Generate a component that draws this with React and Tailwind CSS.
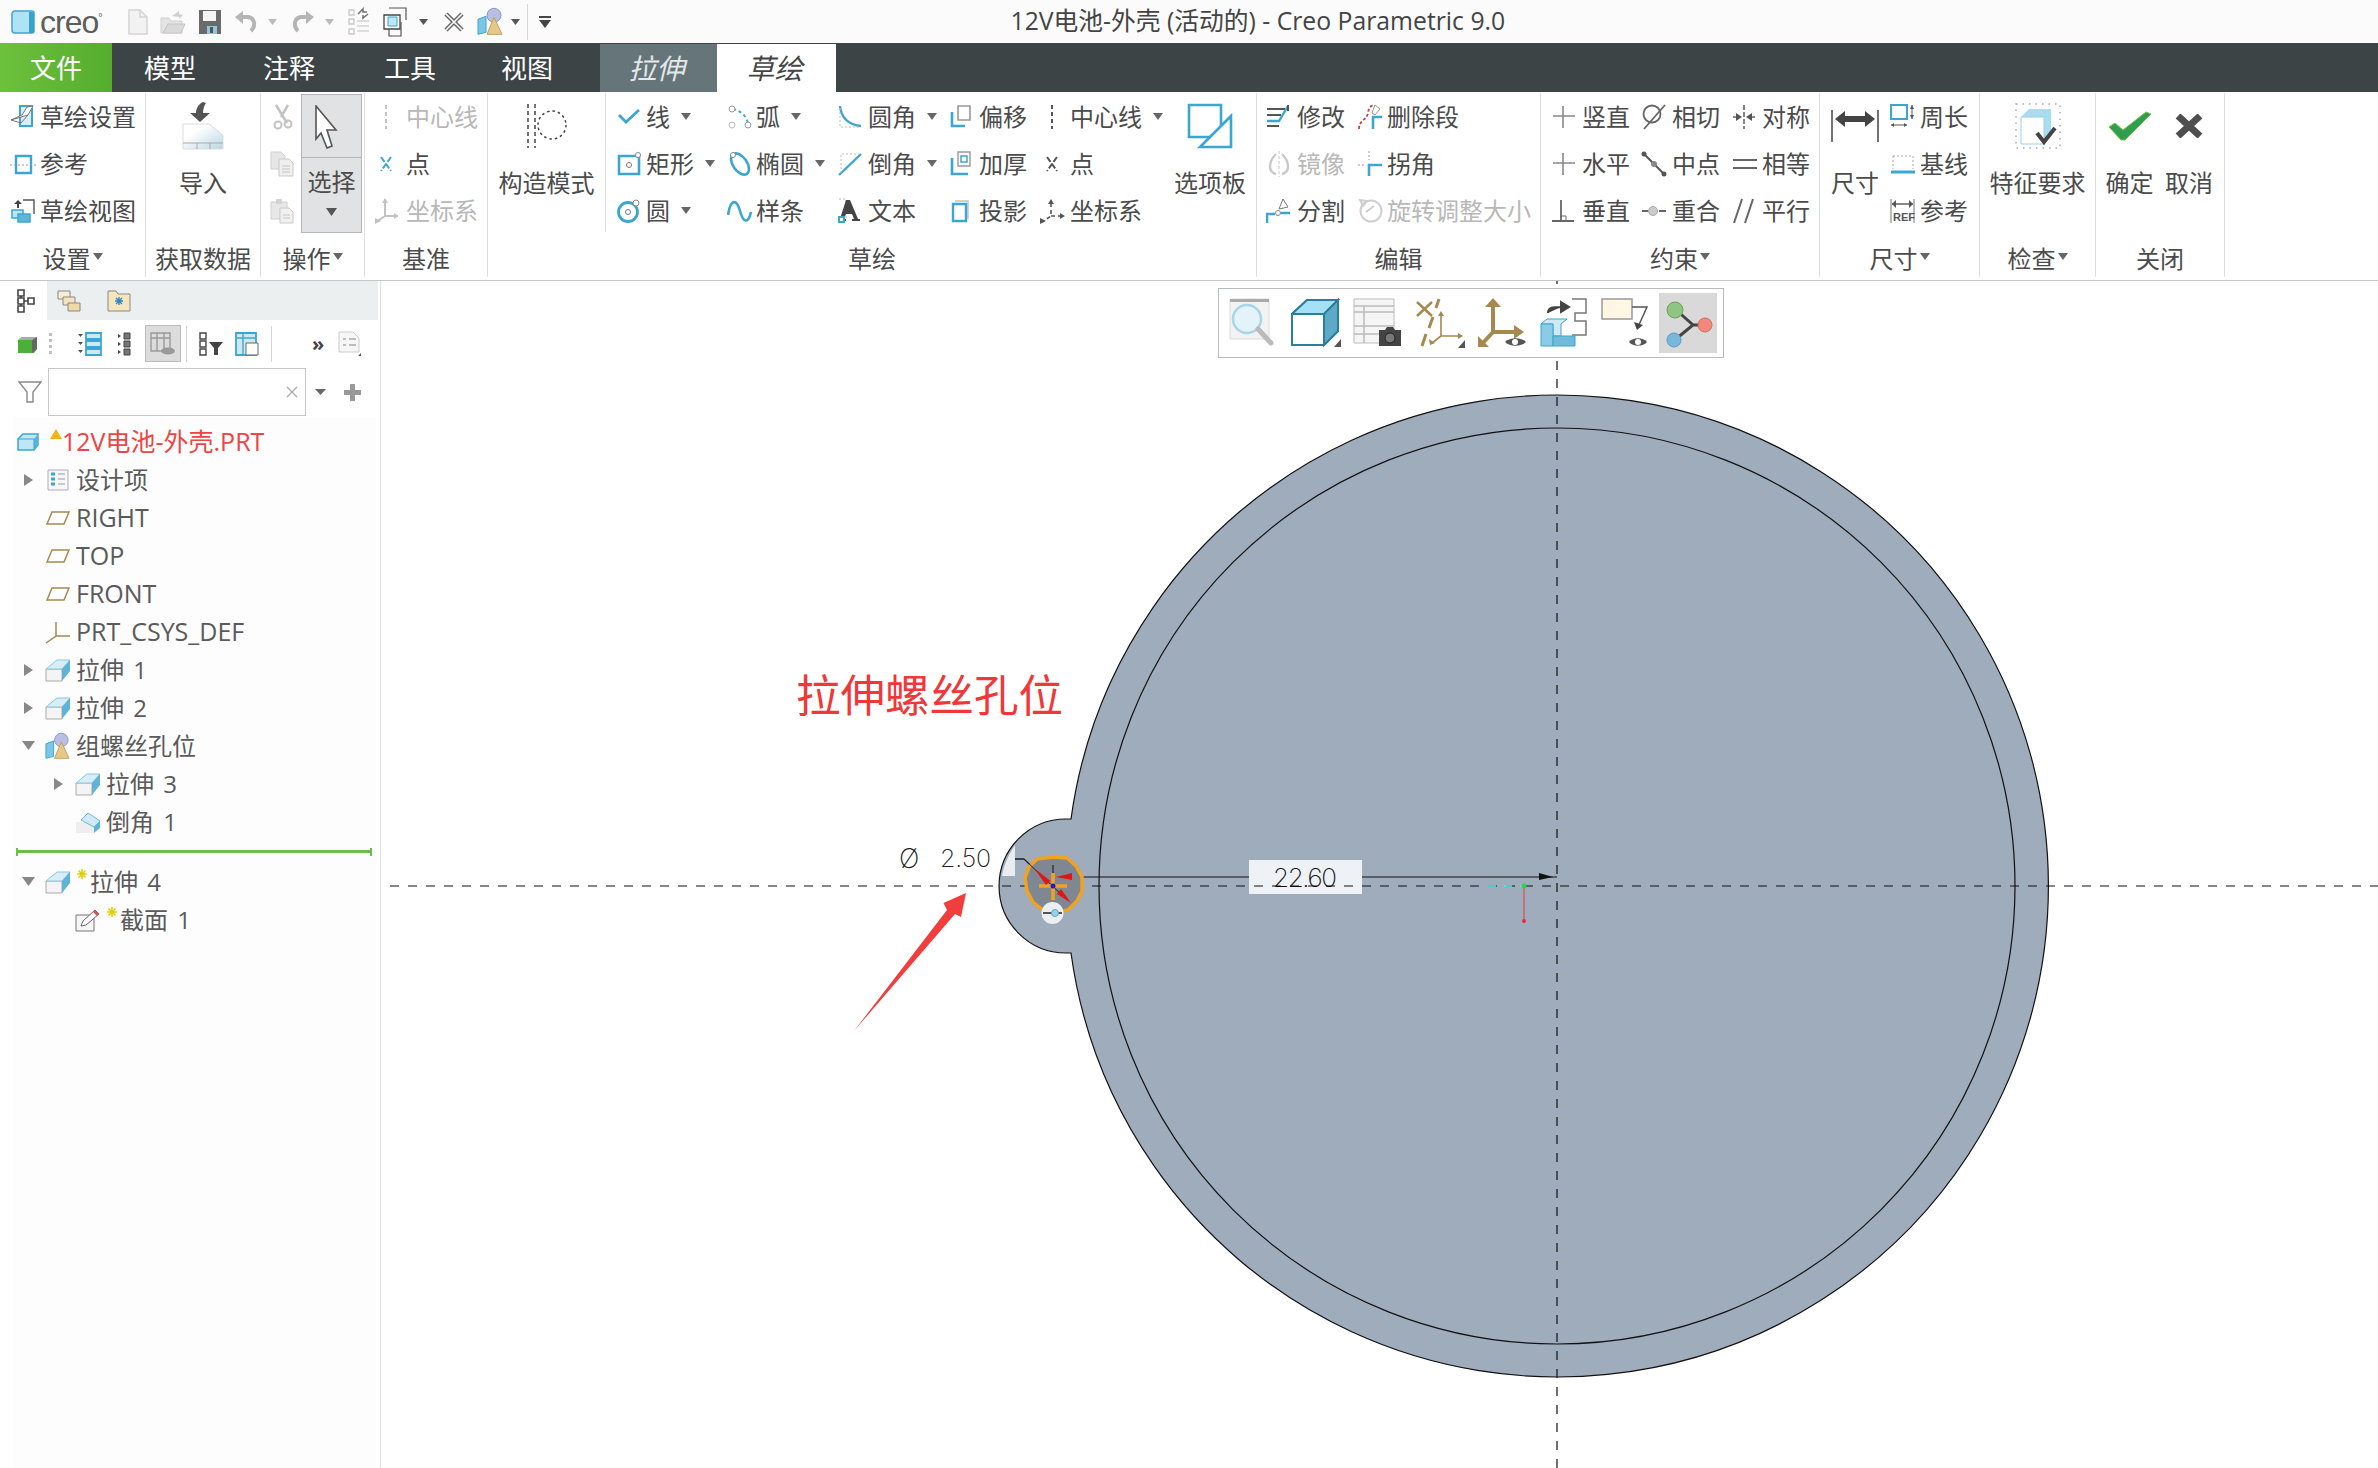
import React from "react";

const BLUE = "#3ba6d2";
const SKY = "#bfe6f5";
const BROWN = "#a5894f";

const S = ({ w = 26, h = 26, children }) => (
  <svg width={w} height={h} viewBox={`0 0 ${w} ${h}`} fill="none" className="shrink-0">
    {children}
  </svg>
);

const Caret = () => (
  <svg width="10" height="7" viewBox="0 0 10 7" className="shrink-0 ml-[11px]">
    <path d="M0 0h10L5 7z" fill="#666" />
  </svg>
);

// ---- quick access icons
const Logo = () => (
  <S w={24} h={24}>
    <path d="M4 1h17a2 2 0 0 1 2 2v18a2 2 0 0 1-2 2H4a3 3 0 0 1-3-3V4a3 3 0 0 1 3-3z" fill="#aee3f5" stroke="#3fa7cf" strokeWidth="1.5" />
    <path d="M18 2h3a2 2 0 0 1 2 2v17a2 2 0 0 1-2 2h-3z" fill="#35a3ce" />
  </S>
);
const NewDoc = () => (
  <S w={22} h={26}>
    <path d="M2 1h11l7 7v17H2z" fill="#f2f2f2" stroke="#d4d4d4" strokeWidth="1.5" />
    <path d="M13 1v7h7" stroke="#d4d4d4" strokeWidth="1.5" />
  </S>
);
const OpenDoc = () => (
  <S w={26} h={26}>
    <path d="M1 24V9h8l2 3h11v12z" fill="#e4e4e4" stroke="#cfcfcf" />
    <path d="M12 7l7-5v3l4 1-4 4v-2z" fill="#cfcfcf" />
    <path d="M3 24l5-9h17l-4 9z" fill="#d9d9d9" stroke="#c6c6c6" />
  </S>
);
const Save = () => (
  <S w={24} h={26}>
    <path d="M1 1h22v24H1z" fill="#6a6a6a" />
    <path d="M5 2h13v10H5z" fill="#f4f4f4" />
    <path d="M9 17h10v8H9z" fill="#8fc7de" />
    <path d="M12 18h3v6h-3z" fill="#555" />
  </S>
);
const Undo = ({ flip }) => (
  <svg width="24" height="22" viewBox="0 0 24 22" fill="none" className={flip ? "-scale-x-100 shrink-0" : "shrink-0"}>
    <path d="M17 20c5-5 4-13-3-14H7" stroke="#b5b5b5" strokeWidth="4" />
    <path d="M9 0v13L1 6z" fill="#b5b5b5" />
  </svg>
);
const Regen = () => (
  <S w={22} h={30}>
    <path d="M1 3h5v5H1zM1 12h5v5H1zM1 22h5v5H1z" stroke="#c9c9c9" strokeWidth="1.3" />
    <path d="M9 14h12M9 19h12M9 24h12" stroke="#d4d4d4" strokeWidth="1.5" />
    <path d="M10 7l5-5v3h4M20 7l-5 4V8" stroke="#777" strokeWidth="1.6" />
  </S>
);
const Windows = () => (
  <S w={24} h={30}>
    <path d="M6 1h17v12" stroke="#555" strokeWidth="1.2" />
    <path d="M1 8h16v14H1z" fill="#fff" stroke="#444" strokeWidth="1.3" />
    <path d="M6 22v7h12V15" stroke="#555" strokeWidth="1.2" />
    <path d="M5 10h9v9H5z" fill={SKY} stroke={BLUE} />
  </S>
);
const CloseX = () => (
  <S w={22} h={22}>
    <path d="M3 3l16 16M19 3L3 19" stroke="#666" strokeWidth="4.5" />
    <path d="M3 3l16 16M19 3L3 19" stroke="#fff" strokeWidth="1.6" />
  </S>
);
const Shapes = ({ w = 26 }) => (
  <svg width={w} height={w * 1.1} viewBox="0 0 26 28" fill="none" className="shrink-0">
    <path d="M1 12l8-3v16l-8 2z" fill="#7cc7e6" stroke={BLUE} />
    <circle cx="17" cy="8" r="7" fill="#b8bfe0" stroke="#8d97c4" />
    <path d="M17 10l8 17H10z" fill="#e6c98a" stroke="#c59f55" />
  </svg>
);
const Customize = () => (
  <S w={12} h={12}>
    <path d="M0 0h12v2H0z" fill="#444" />
    <path d="M0 4h12L6 12z" fill="#444" />
  </S>
);

// ---- ribbon small icons
const icons = {
  setup: (
    <S>
      <path d="M10 2h12v20H10z" fill="#d8eff9" stroke={BLUE} strokeWidth="2" />
      <path d="M1 16L18 11l5-9-6 1-5 8L1 16z" fill="#fff" stroke="#777" />
      <path d="M1 16l10 3 7-8" stroke="#777" />
    </S>
  ),
  ref: (
    <S>
      <path d="M6 5h15v17H6z" fill="#fff" stroke={BLUE} strokeWidth="2.4" />
      <path d="M0 14h26" stroke="#999" strokeDasharray="2 2" />
    </S>
  ),
  view: (
    <S>
      <path d="M13 2h11v14" stroke="#555" strokeWidth="1.4" />
      <path d="M8 2l-4 4h3v4h2V6h3z" fill="#444" />
      <path d="M2 12h11v8H2z" fill={SKY} stroke={BLUE} strokeWidth="1.5" />
      <path d="M8 16h12v8H8z" fill="#5fb6d9" stroke={BLUE} strokeWidth="1.5" />
    </S>
  ),
  cut: (
    <S>
      <path d="M7 1l11 18M19 1L12 13" stroke="#c2c2c2" strokeWidth="2.5" />
      <circle cx="9" cy="21" r="3.5" stroke="#c2c2c2" strokeWidth="2" />
      <circle cx="19" cy="20" r="3.5" stroke="#c2c2c2" strokeWidth="2" />
    </S>
  ),
  copy: (
    <S>
      <path d="M2 1h10l4 4v13H2z" fill="#e6e6e6" stroke="#d0d0d0" />
      <path d="M10 8h10l4 4v13H10z" fill="#efefef" stroke="#c9c9c9" />
      <path d="M13 15h8M13 18h8M13 21h8" stroke="#c4c4c4" />
    </S>
  ),
  paste: (
    <S>
      <path d="M2 4h16v17H2z" fill="#e8e8e8" stroke="#d0d0d0" />
      <path d="M7 1h6v5H7z" fill="#d4d4d4" />
      <path d="M11 10h9l4 4v11H11z" fill="#f1f1f1" stroke="#c9c9c9" />
      <path d="M14 17h7M14 20h7" stroke="#c4c4c4" />
    </S>
  ),
  centerMuted: (
    <S w={6}>
      <path d="M3 1v24" stroke="#c4c4c4" strokeWidth="2" strokeDasharray="4 3" />
    </S>
  ),
  pointBlue: (
    <S w={14} h={18}>
      <path d="M2 2l10 14M12 2L2 16" stroke={BLUE} strokeWidth="2" strokeDasharray="6 2" />
    </S>
  ),
  csysMuted: (
    <S w={24}>
      <path d="M11 4v14L2 24M11 18h12" stroke="#c2c2c2" strokeWidth="2" />
      <path d="M8 5l3-5 3 5zM1 20l6 3-6 3zM20 15l5 3-5 3z" fill="#c2c2c2" />
    </S>
  ),
  line: (
    <S>
      <path d="M3 11l7 7L23 6" stroke={BLUE} strokeWidth="2.8" />
    </S>
  ),
  arc: (
    <S>
      <path d="M6 5c9 2 14 8 15 15" stroke={BLUE} strokeWidth="2" strokeDasharray="3 3" />
      <circle cx="5" cy="5" r="3" fill="#fff" stroke="#999" />
      <circle cx="21" cy="21" r="3" fill="#fff" stroke="#999" />
      <circle cx="5" cy="21" r="3" fill="#fff" stroke="#bbb" />
    </S>
  ),
  rect: (
    <S>
      <path d="M3 5h20v18H3z" fill="#fff" stroke={BLUE} strokeWidth="2.6" />
      <circle cx="13" cy="14" r="2.5" stroke="#777" />
      <circle cx="22" cy="4" r="2.5" fill="#fff" stroke="#888" />
    </S>
  ),
  ellipse: (
    <S>
      <ellipse cx="13" cy="13" rx="7" ry="12" transform="rotate(-35 13 13)" stroke={BLUE} strokeWidth="2.6" />
      <circle cx="6" cy="4" r="2.5" fill="#fff" stroke="#888" />
    </S>
  ),
  circle: (
    <S>
      <circle cx="12" cy="14" r="9.5" fill="#fff" stroke={BLUE} strokeWidth="2.8" />
      <circle cx="12" cy="14" r="2.5" stroke="#777" />
      <circle cx="20" cy="5" r="3" fill="#fff" stroke="#888" />
    </S>
  ),
  spline: (
    <S>
      <path d="M1 17C4-1 10 2 13 13s8 14 11 1" stroke={BLUE} strokeWidth="2.6" />
    </S>
  ),
  fillet: (
    <S>
      <path d="M3 2c1 11 8 19 21 20" stroke={BLUE} strokeWidth="2.4" />
      <path d="M3 4v19h20" stroke="#bbb" strokeDasharray="2 2" />
    </S>
  ),
  chamfer: (
    <S>
      <path d="M2 24L24 3" stroke={BLUE} strokeWidth="2.4" />
      <path d="M4 22V3h18" stroke="#bbb" strokeDasharray="2 2" />
    </S>
  ),
  text: (
    <S>
      <path d="M2 1h7v21H2" stroke="#bbb" strokeDasharray="2 2" />
      <path d="M9 2h4l8 19h2v2h-8v-2h2l-2-5H9l-2 5h2v2H3v-2z" fill="#444" />
      <path d="M1 18h7v7H1z" fill={BLUE} />
      <path d="M3 20h3v3H3z" fill="#fff" />
    </S>
  ),
  offset: (
    <S>
      <path d="M8 2h12v14H8z" fill="#fff" stroke="#999" strokeWidth="1.6" />
      <path d="M2 8v14h13" stroke={BLUE} strokeWidth="2.6" />
    </S>
  ),
  thicken: (
    <S>
      <path d="M8 1h12v14H8z" fill="#fff" stroke="#999" strokeWidth="1.4" />
      <path d="M11 5h6v6h-6z" stroke={BLUE} strokeWidth="1.5" />
      <path d="M2 7v16h16" stroke={BLUE} strokeWidth="2.6" />
    </S>
  ),
  project: (
    <S w={20}>
      <path d="M5 3h13v18" stroke="#c4c4c4" strokeWidth="1.4" />
      <path d="M3 6h13v17H3z" fill="#fff" stroke={BLUE} strokeWidth="2.4" />
    </S>
  ),
  center: (
    <S w={6}>
      <path d="M3 1v24" stroke="#555" strokeWidth="2" strokeDasharray="4 3" />
    </S>
  ),
  point: (
    <S w={14} h={18}>
      <path d="M2 2l10 14M12 2L2 16" stroke="#555" strokeWidth="2" strokeDasharray="6 2" />
    </S>
  ),
  csys: (
    <S w={26}>
      <path d="M12 5v13L3 24M12 18h10" stroke="#555" strokeWidth="1.6" strokeDasharray="4 3" />
      <path d="M9 6l3-5 3 5zM1 20l6 3-6 3zM21 15l5 3-5 3z" fill="#555" />
    </S>
  ),
  modify: (
    <S>
      <path d="M1 5h18M1 11h14M1 22h12" stroke="#555" strokeWidth="2" />
      <path d="M1 17h12l9-15" stroke={BLUE} strokeWidth="2.4" />
      <path d="M22 1v6" stroke="#555" strokeWidth="2" />
    </S>
  ),
  mirror: (
    <S>
      <path d="M13 0v26" stroke="#c9c9c9" strokeDasharray="3 2" />
      <path d="M10 23c-8-2-8-12 0-20M16 23c8-2 8-12 0-20" stroke="#c9c9c9" strokeWidth="2.4" />
    </S>
  ),
  split: (
    <S>
      <path d="M1 25V16h8M15 15h9" stroke={BLUE} strokeWidth="2.6" />
      <circle cx="12" cy="15" r="2.5" stroke="#888" />
      <path d="M13 11l4-10 5 8z" fill="#fff" stroke="#777" />
    </S>
  ),
  trim: (
    <S>
      <path d="M1 25c0-9 8-9 9-16s4-8 7-7" stroke="#c0443e" strokeWidth="1.8" strokeDasharray="3 2" />
      <path d="M24 13h-9v12" stroke={BLUE} strokeWidth="2.6" />
      <path d="M17 1l5 4-5 6-3-2z" fill="#fff" stroke="#999" />
    </S>
  ),
  corner: (
    <S>
      <path d="M11 0v9" stroke="#999" strokeDasharray="2 2" />
      <path d="M0 14h8" stroke="#999" strokeDasharray="2 2" />
      <path d="M24 14H11v11" stroke={BLUE} strokeWidth="2.6" />
    </S>
  ),
  rotate: (
    <S>
      <circle cx="13" cy="13" r="10.5" stroke="#cfcfcf" strokeWidth="2" />
      <path d="M2 2l7 1-4 5zM8 14l8-6" stroke="#cfcfcf" strokeWidth="2" />
    </S>
  ),
  vertical: (
    <S>
      <path d="M12 2v22M2 12h22" stroke="#888" strokeWidth="1.6" />
    </S>
  ),
  horizontal: (
    <S>
      <path d="M12 2v22M2 12h22" stroke="#888" strokeWidth="1.6" />
    </S>
  ),
  perp: (
    <S>
      <path d="M10 2v21M1 23h22" stroke="#666" strokeWidth="1.8" />
      <path d="M10 18h5v5" stroke="#666" />
    </S>
  ),
  tangent: (
    <S>
      <circle cx="11" cy="10" r="8.5" stroke="#666" strokeWidth="1.8" />
      <path d="M24 1L3 25" stroke="#666" strokeWidth="1.8" />
    </S>
  ),
  mid: (
    <S>
      <path d="M2 2l22 22" stroke="#555" strokeWidth="2" />
      <circle cx="13" cy="13" r="3" fill="#888" />
      <circle cx="3" cy="3" r="2.5" fill="#555" />
      <circle cx="23" cy="23" r="2.5" fill="#555" />
    </S>
  ),
  coincide: (
    <S>
      <path d="M1 13h6M18 13h7" stroke="#666" strokeWidth="1.8" />
      <circle cx="12" cy="13" r="4.5" fill="#ccc" stroke="#aaa" />
    </S>
  ),
  symmetric: (
    <S>
      <path d="M12 1v24" stroke="#666" strokeWidth="1.6" strokeDasharray="5 2" />
      <path d="M1 13h4M19 13h4" stroke="#666" strokeWidth="1.6" />
      <path d="M4 9l6 4-6 4zM20 9l-6 4 6 4z" fill="#555" />
    </S>
  ),
  equal: (
    <S>
      <path d="M1 9h24M1 17h24" stroke="#666" strokeWidth="2" />
    </S>
  ),
  parallel: (
    <S>
      <path d="M10 1L2 25M21 1l-8 24" stroke="#666" strokeWidth="2" />
    </S>
  ),
  perimeter: (
    <S>
      <path d="M1 1h16v14H1z" fill="#fff" stroke={BLUE} strokeWidth="2" />
      <path d="M22 1v14M1 21h16" stroke="#555" />
      <path d="M20 5l2-4 2 4zM20 11l2 4 2-4zM4 19l-3 2 3 2zM14 19l3 2-3 2z" fill="#555" />
    </S>
  ),
  baseline: (
    <S>
      <path d="M3 5h20M3 5v13M23 5v13" stroke="#aaa" strokeDasharray="2 2" />
      <path d="M1 21h24" stroke={BLUE} strokeWidth="3" />
    </S>
  ),
  refDim: (
    <S>
      <path d="M1 1v24M24 1v24" stroke="#777" />
      <path d="M2 6h21" stroke="#555" strokeWidth="1.4" />
      <path d="M6 2L2 6l4 4zM19 2l4 4-4 4z" fill="#555" />
      <text x="3" y="23" fontSize="11" fontWeight="700" fill="#555" fontFamily="Liberation Sans">REF</text>
    </S>
  ),
};

// ---- ribbon layout pieces
const Item = ({ icon, label, muted, caret, box }) => (
  <div className="flex h-[47px] items-center">
    <span className={`flex items-center shrink-0 ${box}`}>{icons[icon]}</span>
    <span className={muted ? "text-[#b8b8b8]" : "text-[#4b4b4b]"}>{label}</span>
    {caret && <Caret />}
  </div>
);

const Col = ({ className, box, items }) => (
  <div className={`flex flex-col shrink-0 ${className}`}>
    {items.map((it) => (
      <Item key={it.label} box={box} {...it} />
    ))}
  </div>
);

const Big = ({ className, icon, label }) => (
  <div className={`flex flex-col items-center shrink-0 ${className}`}>
    <div className="flex h-[66px] items-center justify-center">{icon}</div>
    <div className="flex h-[47px] items-center text-[#4b4b4b] whitespace-nowrap">{label}</div>
  </div>
);

const Group = ({ className, label, caret, children }) => (
  <div className={`flex h-full flex-col shrink-0 border-r border-[#dedede] ${className}`}>
    <div className="flex h-[141px]">{children}</div>
    <div className="flex flex-1 items-center justify-center pt-[7px] text-[#4b4b4b]">
      {label}
      {caret && (
        <svg width="10" height="7" viewBox="0 0 10 7" className="ml-[2px] mb-[6px]">
          <path d="M0 0h10L5 7z" fill="#666" />
        </svg>
      )}
    </div>
  </div>
);

const Ribbon = () => (
  <div className="flex h-[188px] pt-[1px] pb-[3px] text-[24px] leading-none">
    <Group className="w-[146px]" label="设置" caret>
      <Col
        className="pl-[10px]"
        box="w-[30px]"
        items={[
          { icon: "setup", label: "草绘设置" },
          { icon: "ref", label: "参考" },
          { icon: "view", label: "草绘视图" },
        ]}
      />
    </Group>
    <Group className="w-[115px]" label="获取数据">
      <Big
        className="w-full"
        label="导入"
        icon={
          <S w={42} h={48}>
            <path d="M21 0c-4 2-7 6-7 11H8l10 9 10-9h-7c0-4 1-7 3-10z" fill="#555" />
            <path d="M1 22h26l14 11v14H1z" fill="url(#imp)" stroke="#ddd" />
            <path d="M1 41h40M15 41v6M28 41v6" stroke="#aaa" />
            <defs>
              <linearGradient id="imp" x1="0" y1="0" x2="1" y2="1">
                <stop offset="0.3" stopColor="#fff" />
                <stop offset="1" stopColor="#b8d6e4" />
              </linearGradient>
            </defs>
          </S>
        }
      />
    </Group>
    <Group className="w-[104px]" label="操作" caret>
      <div className="flex w-[40px] shrink-0 flex-col items-end pr-[6px]">
        <div className="flex h-[47px] items-center">{icons.cut}</div>
        <div className="flex h-[47px] items-center">{icons.copy}</div>
        <div className="flex h-[47px] items-center">{icons.paste}</div>
      </div>
      <div className="mt-[1px] flex h-[139px] w-[61px] flex-col border border-[#b4b7b9] bg-[#e1e2e3] shrink-0">
        <div className="flex h-[63px] border-b border-[#b4b7b9] pl-[12px] pt-[10px]">
          <S w={24} h={44}>
            <path d="M2 1l20 24-9 0 5 16-5 2-6-15-5 6z" fill="#fff" stroke="#555" strokeWidth="1.6" />
          </S>
        </div>
        <div className="flex h-[48px] items-center justify-center text-[#4b4b4b]">选择</div>
        <div className="flex justify-center pt-[2px]">
          <svg width="11" height="8" viewBox="0 0 11 8">
            <path d="M0 0h11L5.500 8z" fill="#555" />
          </svg>
        </div>
      </div>
    </Group>
    <Group className="w-[123px]" label="基准">
      <div className="flex w-[41px] shrink-0 flex-col items-center">
        <div className="flex h-[47px] items-center">{icons.centerMuted}</div>
        <div className="flex h-[47px] items-center">{icons.pointBlue}</div>
        <div className="flex h-[47px] items-center">{icons.csysMuted}</div>
      </div>
      <div className="flex flex-col">
        <div className="flex h-[47px] items-center text-[#b8b8b8]">中心线</div>
        <div className="flex h-[47px] items-center text-[#4b4b4b]">点</div>
        <div className="flex h-[47px] items-center text-[#b8b8b8]">坐标系</div>
      </div>
    </Group>
    <Group className="w-[769px]" label="草绘">
      <div className="h-[139px] border-r border-[#dedede] shrink-0">
        <Big
          className="w-[117px]"
          label="构造模式"
          icon={
            <S w={42} h={46}>
              <path d="M2 1v44M9 1v44" stroke="#444" strokeWidth="1.5" strokeDasharray="4 3" />
              <circle cx="26" cy="22" r="14" stroke="#444" strokeWidth="1.5" strokeDasharray="2.5 3" />
            </S>
          }
        />
      </div>
      <Col
        className="w-[121px] pl-[10px]"
        box="w-[30px]"
        items={[
          { icon: "line", label: "线", caret: true },
          { icon: "rect", label: "矩形", caret: true },
          { icon: "circle", label: "圆", caret: true },
        ]}
      />
      <Col
        className="w-[110px]"
        box="w-[29px]"
        items={[
          { icon: "arc", label: "弧", caret: true },
          { icon: "ellipse", label: "椭圆", caret: true },
          { icon: "spline", label: "样条" },
        ]}
      />
      <Col
        className="w-[113px]"
        box="w-[31px]"
        items={[
          { icon: "fillet", label: "圆角", caret: true },
          { icon: "chamfer", label: "倒角", caret: true },
          { icon: "text", label: "文本" },
        ]}
      />
      <Col
        className="w-[90px]"
        box="w-[29px]"
        items={[
          { icon: "offset", label: "偏移" },
          { icon: "thicken", label: "加厚" },
          { icon: "project", label: "投影" },
        ]}
      />
      <Col
        className="w-[134px]"
        box="w-[30px] justify-center pr-[6px]"
        items={[
          { icon: "center", label: "中心线", caret: true },
          { icon: "point", label: "点" },
          { icon: "csys", label: "坐标系" },
        ]}
      />
      <Big
        className="w-[72px]"
        label="选项板"
        icon={
          <S w={46} h={46}>
            <path d="M2 2h32v32H2z" fill="#fff" stroke={BLUE} strokeWidth="2.6" />
            <path d="M44 13v31H13z" fill="#fff" stroke={BLUE} strokeWidth="2.6" />
          </S>
        }
      />
    </Group>
    <Group className="w-[284px]" label="编辑">
      <Col
        className="w-[101px] pl-[9px]"
        box="w-[31px]"
        items={[
          { icon: "modify", label: "修改" },
          { icon: "mirror", label: "镜像", muted: true },
          { icon: "split", label: "分割" },
        ]}
      />
      <Col
        className="flex-1"
        box="w-[29px]"
        items={[
          { icon: "trim", label: "删除段" },
          { icon: "corner", label: "拐角" },
          { icon: "rotate", label: "旋转调整大小", muted: true },
        ]}
      />
    </Group>
    <Group className="w-[279px]" label="约束" caret>
      <Col
        className="w-[100px] pl-[10px]"
        box="w-[31px]"
        items={[
          { icon: "vertical", label: "竖直" },
          { icon: "horizontal", label: "水平" },
          { icon: "perp", label: "垂直" },
        ]}
      />
      <Col
        className="w-[91px]"
        box="w-[31px]"
        items={[
          { icon: "tangent", label: "相切" },
          { icon: "mid", label: "中点" },
          { icon: "coincide", label: "重合" },
        ]}
      />
      <Col
        className="flex-1"
        box="w-[30px]"
        items={[
          { icon: "symmetric", label: "对称" },
          { icon: "equal", label: "相等" },
          { icon: "parallel", label: "平行" },
        ]}
      />
    </Group>
    <Group className="w-[160px]" label="尺寸" caret>
      <Big
        className="w-[70px]"
        label="尺寸"
        icon={
          <S w={48} h={32}>
            <path d="M1 0v32M47 0v32" stroke="#444" strokeWidth="1.5" />
            <path d="M4 9l10-8v5h20V1l10 8-10 8v-5H14v5z" fill="#444" />
          </S>
        }
      />
      <Col
        className="flex-1"
        box="w-[30px]"
        items={[
          { icon: "perimeter", label: "周长" },
          { icon: "baseline", label: "基线" },
          { icon: "refDim", label: "参考" },
        ]}
      />
    </Group>
    <Group className="w-[116px]" label="检查" caret>
      <Big
        className="w-full"
        label="特征要求"
        icon={
          <S w={46} h={46}>
            <path d="M1 1h44v44H1z" stroke="#aaa" strokeDasharray="1.5 5" strokeWidth="1.5" />
            <path d="M6 14l8-8h22v26l-7 9H6z" fill="#fff" />
            <path d="M6 14l8-8h22l-7 8zM29 14l7-8v26l-7 9z" fill="#a9dcef" />
            <path d="M6 14h23v27H6z" stroke="#9bd0e5" />
            <path d="M22 30l7 9 11-14" stroke="#444" strokeWidth="4" />
          </S>
        }
      />
    </Group>
    <Group className="w-[129px]" label="关闭">
      <Big
        className="w-[67px]"
        label="确定"
        icon={
          <S w={44} h={30}>
            <path d="M1 16l6-4 8 7L38 1l5 2-26 26h-4z" fill="#2f9e4f" stroke="#7fc04a" />
          </S>
        }
      />
      <Big
        className="w-[52px]"
        label="取消"
        icon={
          <S w={30} h={24}>
            <path d="M4 2l22 20M26 2L4 22" stroke="#4f4f4f" strokeWidth="7" />
          </S>
        }
      />
    </Group>
  </div>
);

// ---- tree icons
const Part = () => (
  <S w={22} h={18}>
    <path d="M1 6l5-5h15v11l-4 5H1z" fill={SKY} stroke={BLUE} strokeWidth="1.5" />
    <path d="M17 6l4-5v11l-4 5z" fill="#59b4d9" />
    <path d="M1 6h16v11" stroke={BLUE} />
  </S>
);
const Extrude = () => (
  <S w={26} h={24}>
    <path d="M1 11h16v12H1z" fill="#f4f4f4" stroke="#aaa" />
    <path d="M1 11L12 2h13L17 11z" fill="#d5eef8" stroke="#8cc6de" />
    <path d="M17 11l8-9v11l-8 10z" fill="#5fb4d6" />
  </S>
);
const Plane = () => (
  <S w={24} h={14}>
    <path d="M6 1h17l-5 12H1z" fill="#fff" stroke={BROWN} strokeWidth="1.5" />
  </S>
);
const TreeCsys = () => (
  <S w={26} h={24}>
    <path d="M11 2v14L1 23M11 16h14" stroke={BROWN} strokeWidth="1.5" />
  </S>
);
const Star = () => (
  <S w={12} h={12}>
    <path d="M6 1v10M1 6h10M2.500 2.500l7 7M9.500 2.500l-7 7" stroke="#e0d000" strokeWidth="1.6" />
  </S>
);
const Arrow = ({ open }) =>
  open ? (
    <S w={14} h={10}>
      <path d="M0 0h13L6.500 9z" fill="#888" />
    </S>
  ) : (
    <S w={12} h={14}>
      <path d="M1 1l9 6-9 6z" fill="#888" />
    </S>
  );

const Row = ({ className, arrow, icon, star, children, latin }) => (
  <div className={`flex h-[38px] items-center ${className}`}>
    <span className="ml-[5px] mr-[5px] flex w-[20px] justify-center shrink-0">
      {arrow && <Arrow open={arrow === "open"} />}
    </span>
    <span className="flex w-[27px] justify-center shrink-0">{icon}</span>
    {star && (
      <span className="ml-[5px] mr-[2px] mb-[16px] shrink-0">
        <Star />
      </span>
    )}
    <span className={`whitespace-pre text-[#5a5a5a] [word-spacing:3px] ${star ? "" : "ml-[5px]"} ${latin ? "text-[25px]" : ""}`}>{children}</span>
  </div>
);

const Tree = () => (
  <aside className="flex w-[381px] shrink-0 flex-col border-r border-[#dfe1e1] bg-[#fff] text-[24px] leading-none">
    <div className="flex h-[39px] items-center bg-[#ffffff]">
      <div className="flex w-[47px] justify-center pl-[4px]">
        <S w={18} h={26}>
          <path d="M1 2h6v6H1zM1 10h6v6H1zM1 18h6v6H1zM11 10h6v6h-6zM4 8v2M4 16v2M7 13h4" stroke="#444" strokeWidth="1.6" />
        </S>
      </div>
      <div className="flex h-full flex-1 items-center bg-[#eceff0] mr-[2px] pl-[10px] gap-[26px]">
        <S w={24} h={24}>
          <path d="M1 2h12v8H1z" fill="#f8edd5" stroke="#888" />
          <path d="M6 8h12v8H6z" fill="#f4e3bd" stroke="#888" />
          <path d="M11 14h12v8H11z" fill="#efd9a7" stroke="#888" />
        </S>
        <S w={24} h={24}>
          <path d="M1 5V2h8l2 3h12v17H1z" fill="#f6e6c0" stroke="#888" />
          <path d="M12 8v8M8 12h8M9 9l6 6M15 9l-6 6" stroke="#3388bb" strokeWidth="1.4" />
        </S>
      </div>
    </div>
    <div className="flex h-[47px] items-center">
      <span className="ml-[18px]">
        <S w={20} h={20}>
          <path d="M0 6l4-3h15v12l-3 4H0z" fill="#4caf3a" />
          <path d="M14 6l5-3v12l-5 4z" fill="#666" />
          <path d="M0 6l4-3h15l-5 3z" fill="#aaa" />
        </S>
      </span>
      <span className="ml-[11px] mr-[26px] flex flex-col gap-[3px]">
        <i className="block h-[3px] w-[3px] bg-[#c0c0c0]" />
        <i className="block h-[3px] w-[3px] bg-[#c0c0c0]" />
        <i className="block h-[3px] w-[3px] bg-[#c0c0c0]" />
        <i className="block h-[3px] w-[3px] bg-[#c0c0c0]" />
      </span>
      <S w={24} h={24}>
        <path d="M8 1h15v6H8zM8 9h15v6H8zM8 17h15v6H8z" fill="#cfe9f4" stroke={BLUE} strokeWidth="1.8" />
        <path d="M0 2h5L2.500 5zM0 10h5l-2.500 3zM0 18h5l-2.500 3z" fill="#555" />
      </S>
      <span className="ml-[16px]">
        <S w={13} h={24}>
          <path d="M6 1h6v6H6zM6 9h6v6H6zM6 17h6v6H6z" fill="#777" stroke="#444" />
          <path d="M0 2l3 2-3 2zM0 10l3 2-3 2zM0 18l3 2-3 2z" fill="#444" />
        </S>
      </span>
      <span className="ml-[14px] flex h-[37px] w-[36px] items-center justify-center border border-[#bcbcbc] bg-[#dcdcdc]">
        <S w={26} h={24}>
          <path d="M1 1h19v18H1zM1 6h19M7 1v18M14 1v18" stroke="#999" strokeWidth="1.4" />
          <ellipse cx="18" cy="19" rx="7" ry="3.500" fill="#999" />
        </S>
      </span>
      <span className="ml-[5px] h-[36px] w-px bg-[#d5d5d5]" />
      <span className="ml-[12px]">
        <S w={24} h={24}>
          <path d="M1 1h6v6H1zM1 9h6v6H1zM1 17h6v6H1z" stroke="#444" strokeWidth="1.4" />
          <path d="M10 10h14l-5 6v7h-4v-7z" fill="#444" />
        </S>
      </span>
      <span className="ml-[12px]">
        <S w={24} h={24}>
          <path d="M1 1h20v22H1z" fill="#cfe9f4" stroke={BLUE} strokeWidth="1.8" />
          <path d="M1 6h20M8 1v22" stroke={BLUE} strokeWidth="1.4" />
          <path d="M11 11h12v12H11z" fill="#fff" stroke="#666" />
        </S>
      </span>
      <span className="ml-[12px] h-[36px] w-px bg-[#d5d5d5]" />
      <span className="ml-[40px] text-[20px] font-bold text-[#444]">»</span>
      <span className="ml-[14px]">
        <S w={24} h={26}>
          <path d="M1 1h14l6 6v14H1z" fill="#f6f6f6" stroke="#ccc" />
          <path d="M5 8h3M11 8h7M5 14h3M11 14h7" stroke="#aaa" strokeWidth="1.5" />
          <path d="M23 22v3h-3z" fill="#555" />
        </S>
      </span>
    </div>
    <div className="flex h-[50px] items-center">
      <span className="ml-[18px]">
        <S w={24} h={22}>
          <path d="M1 1h22l-8 10v10h-6V11z" fill="#fff" stroke="#888" strokeWidth="1.4" />
        </S>
      </span>
      <div className="ml-[6px] flex h-[48px] w-[258px] items-center justify-end border border-[#c8c8c8] bg-white pr-[7px]">
        <S w={12} h={12}>
          <path d="M1 1l10 10M11 1L1 11" stroke="#aaa" strokeWidth="1.3" />
        </S>
      </div>
      <svg width="11" height="6" viewBox="0 0 11 6" className="ml-[9px]">
        <path d="M0 0h11L5.500 6z" fill="#666" />
      </svg>
      <span className="ml-[18px]">
        <S w={17} h={17}>
          <path d="M6 0h5v6h6v5h-6v6H6v-6H0V6h6z" fill="#999" />
        </S>
      </span>
    </div>
    <div className="flex flex-1 flex-col bg-[#fdfdfd] ml-[14px] mr-[3px] pt-[5.500px]">
      <div className="flex h-[38px] items-center pl-[3px] text-[25px] text-[#ee4444]">
        <Part />
        <span className="ml-[11px] mb-[16px]">
          <S w={12} h={10}>
            <path d="M6 0l6 10H0z" fill="#f2b21c" />
          </S>
        </span>
        <span>12V电池-外壳.PRT</span>
      </div>
      <Row arrow="closed" icon={<S w={22} h={22}><path d="M1 1h20v20H1z" fill="#f8f8f8" stroke="#aac" /><path d="M4 5h4M4 10h4M4 15h4" stroke={BLUE} strokeWidth="3" /><path d="M11 5h7M11 10h7M11 15h7" stroke="#999" /></S>}>设计项</Row>
      <Row latin icon={<Plane />}>RIGHT</Row>
      <Row latin icon={<Plane />}>TOP</Row>
      <Row latin icon={<Plane />}>FRONT</Row>
      <Row latin icon={<TreeCsys />}>PRT_CSYS_DEF</Row>
      <Row arrow="closed" icon={<Extrude />}>拉伸 1</Row>
      <Row arrow="closed" icon={<Extrude />}>拉伸 2</Row>
      <Row arrow="open" icon={<Shapes w={25} />}>组螺丝孔位</Row>
      <Row className="pl-[30px]" arrow="closed" icon={<Extrude />}>拉伸 3</Row>
      <Row className="pl-[30px]" icon={<S w={26} h={24}><path d="M1 12h18v11H1z" fill="#eee" /><path d="M6 10l7-7 12 8-6 6z" fill="#cfeaf6" stroke="#6bb9d9" /><path d="M19 17l6-6v7l-6 5z" fill="#5fb4d6" /></S>}>倒角 1</Row>
      <div className="mt-[7px] mb-[7px] flex h-[8px] items-center ml-[2px] mr-[5px] border-x-2 border-[#6abf4b]">
        <div className="h-[3px] w-full bg-[#6abf4b]" />
      </div>
      <Row arrow="open" icon={<Extrude />} star>拉伸 4</Row>
      <Row className="pl-[30px]" icon={<S w={26} h={24}><path d="M1 7h18v16H1z" fill="#f6f6f6" stroke="#777" /><path d="M6 18l2-5L20 2l4 4L11 17z" fill="#fff" stroke="#666" /><path d="M20 2l4 4-2 2-4-4z" fill="#d9534f" /></S>} star>截面 1</Row>
    </div>
  </aside>
);

const GraphicsBar = () => (
  <div className="absolute left-[837px] top-[7px] flex h-[70px] w-[506px] items-center gap-[12px] border border-[#b8bcbc] bg-white pl-[10px]">
    <S w={50} h={50}>
      <path d="M1 1h39v40H1z" fill="#f2f2f2" stroke="#ddd" />
      <path d="M1 1h39v3H1z" fill="#aaa" />
      <circle cx="18" cy="21" r="14" fill="#e4f3fa" stroke="#a8d5e8" strokeWidth="2.500" />
      <path d="M29 31l13 14" stroke="#bbb" strokeWidth="5" strokeLinecap="round" />
    </S>
    <S w={50} h={50}>
      <path d="M1 16L16 2h31v31L33 47H1z" fill="#fff" stroke="#2b7f9c" strokeWidth="2" />
      <path d="M1 16L16 2h31L33 16z" fill="#a6e0f5" stroke="#2b7f9c" strokeWidth="2" />
      <path d="M33 16L47 2v31L33 47z" fill="#5fa9c8" stroke="#2b7f9c" strokeWidth="2" />
      <path d="M50 41v8h-7z" fill="#555" />
    </S>
    <S w={50} h={50}>
      <path d="M1 1h40v44H1z" fill="#f5f5f5" stroke="#bbb" />
      <path d="M1 8h40M1 14h40M1 28h40M1 36h40M11 8v37" stroke="#bbb" strokeWidth="1.5" />
      <path d="M26 32h6l2-3h6l2 3h6v16H26z" fill="#444" />
      <circle cx="37" cy="40" r="5" fill="#777" stroke="#222" />
    </S>
    <S w={50} h={50}>
      <path d="M2 4l15 14M17 4L2 18" stroke={BROWN} strokeWidth="2.500" />
      <path d="M24 1l-3 9M18 19l-4 11M11 36l-4 12" stroke={BROWN} strokeWidth="3" />
      <path d="M26 16v22L17 45M26 38h21" stroke={BROWN} strokeWidth="1.6" />
      <path d="M23 18l3-5 3 5zM14 41l1 6 5-2zM43 35l5 3-5 3z" fill={BROWN} />
      <path d="M50 42v8h-7z" fill="#555" />
    </S>
    <S w={50} h={50}>
      <path d="M16 6v28L4 47M16 34h26" stroke={BROWN} strokeWidth="4" />
      <path d="M8 9l8-9 8 9zM1 38v11h11zM37 27l10 7-10 7z" fill={BROWN} />
      <path d="M28 44c5-5 16-5 21 0-5 5-16 5-21 0z" fill="#555" />
      <circle cx="38" cy="44" r="3" fill="#fff" />
    </S>
    <S w={50} h={50}>
      <path d="M33 1h14v14H36v8h11v14H33" stroke="#777" strokeWidth="1.5" />
      <path d="M9 15c0-6 5-6 13-6M22 4l8 5-8 5z" stroke="#444" strokeWidth="2" fill="#444" />
      <path d="M2 26l6-5h20l-6 5v12h-8V26z" fill="#cfeaf6" stroke={BLUE} />
      <path d="M2 26h12v22H2z" fill="#8ccbe5" stroke={BLUE} />
      <path d="M14 38h22v10H14z" fill="#6fbbd9" stroke={BLUE} />
    </S>
    <S w={50} h={50}>
      <path d="M1 1h30v20H1z" fill="#fff7e3" stroke="#999" strokeWidth="1.5" />
      <path d="M31 9h15l-9 20" stroke="#555" strokeWidth="1.5" />
      <path d="M33 24l3 8 6-5z" fill="#444" />
      <path d="M28 44c4-5 14-5 18 0-4 5-14 5-18 0z" fill="#555" />
      <circle cx="37" cy="44" r="3" fill="#fff" />
    </S>
    <div className="-ml-[4px] flex h-[60px] w-[58px] items-center justify-center bg-[#d9d9d9]">
      <S w={50} h={50}>
        <path d="M12 11l18 16-17 14M30 27h14" stroke="#444" strokeWidth="3" />
        <circle cx="12" cy="12" r="8" fill="#8fc483" stroke="#6aa25c" />
        <circle cx="42" cy="27" r="7" fill="#f2897c" stroke="#d76a5c" />
        <circle cx="11" cy="42" r="7" fill="#79b8dc" stroke="#5a9bc4" />
      </S>
    </div>
  </div>
);

// page coordinates are kept in the viewBox, the sketch is a free canvas
const Sketch = () => (
  <svg className="absolute inset-0" width="1997" height="1187" viewBox="381 281 1997 1187" fill="none">
    <path
      d="M1071 819H1066A67 67 0 0 0 1066 953H1071A491 491 0 1 0 1071 819Z"
      fill="#9eacbc"
      stroke="#111"
      strokeWidth="1.2"
    />
    <circle cx="1557" cy="886" r="458" stroke="#111" strokeWidth="1.2" />
    <path d="M1002 876c2-12 7-22 13-31v31z" fill="#e9edf1" />
    <rect x="1249" y="860" width="113" height="34" fill="#eef1f5" />
    <path d="M390 886H2378" stroke="#111" strokeWidth="1.2" strokeDasharray="9 9" />
    <path d="M1557 361V1468" stroke="#111" strokeWidth="1.2" strokeDasharray="9 9" />
    <path d="M1557 281v3" stroke="#111" strokeWidth="1.2" />
    <path d="M1078 877H1249M1362 877H1557" stroke="#111" strokeWidth="1.2" />
    <path d="M1539 873l14 4-14 3z" fill="#111" />
    <text x="1273" y="887" fontSize="26" fill="#111" fontFamily="Inter" fontWeight="200" textLength="64" lengthAdjust="spacing">22.60</text>
    <text x="899" y="868" fontSize="27" fill="#222" fontFamily="Inter" fontWeight="200">Ø</text>
    <text x="940" y="867" fontSize="25" fill="#222" fontFamily="Inter" fontWeight="200" textLength="51" lengthAdjust="spacing">2.50</text>
    <path d="M1015 859h9l40 38" stroke="#111" strokeWidth="1.2" />
    <path d="M1053 857l14 1 9 8 6 11v14l-5 10-9 9-12 3-13-3-10-8-6-11-2-13 4-11 8-8z" fill="#7f8892" stroke="#f1a21f" strokeWidth="3.500" />
    <path d="M1053 865v15" stroke="#222" strokeWidth="1.2" />
    <path d="M1015 859h9l40 38" stroke="#222" strokeWidth="1" />
    <path d="M1053 873v27M1039 886h28" stroke="#f1a21f" strokeWidth="3.500" />
    <path d="M1034 868L1046 885 1050.500 881z" fill="#e01515" />
    <path d="M1071 903L1057 894 1061 889z" fill="#e01515" />
    <path d="M1056 877L1072 873V880z" fill="#e01515" />
    <circle cx="1053" cy="886" r="2.500" fill="#1a1ad0" />
    <circle cx="1052.500" cy="913" r="11" fill="#eceff2" />
    <path d="M1043 913h19" stroke="#555" strokeWidth="2" />
    <circle cx="1055" cy="913" r="3.500" fill="#9ad2e8" stroke="#5aa5c5" />
    <path d="M1488 886h34" stroke="#5fe6e6" strokeWidth="1.5" strokeDasharray="8 8" />
    <path d="M1524 886v35" stroke="#e04a5a" strokeWidth="1.2" />
    <circle cx="1524" cy="886" r="2.500" fill="#2fd24a" />
    <circle cx="1524" cy="921" r="2" fill="#e0303a" />
    <text x="796" y="712" fontSize="44.500" fill="#ef3838" fontFamily="Noto Sans CJK SC">拉伸螺丝孔位</text>
    <path d="M854 1031L947 910 943.500 903 966 893 961 917 955 914z" fill="#f23d3d" />
  </svg>
);

const App = () => (
  <div className="flex h-[1468px] w-[2378px] flex-col overflow-hidden bg-white font-['Open_Sans','Noto_Sans_CJK_SC',sans-serif]">
    <header className="flex h-[43px] items-center bg-[#fbfbfb]">
      <span className="ml-[11px]"><Logo /></span>
      <span className="ml-[5px] text-[32px] leading-none tracking-[-1px] text-[#5d5d5d] font-['Liberation_Sans',sans-serif]">creo</span>
      <span className="mb-[8px] text-[10px] text-[#666]">°</span>
      <span className="ml-[24px]"><NewDoc /></span>
      <span className="ml-[11px]"><OpenDoc /></span>
      <span className="ml-[12px]"><Save /></span>
      <span className="ml-[12px]"><Undo /></span>
      <svg width="9" height="6" viewBox="0 0 9 6" className="ml-[10px]"><path d="M0 0h9L4.500 6z" fill="#bbb" /></svg>
      <span className="ml-[14px]"><Undo flip /></span>
      <svg width="9" height="6" viewBox="0 0 9 6" className="ml-[10px]"><path d="M0 0h9L4.500 6z" fill="#bbb" /></svg>
      <span className="ml-[14px]"><Regen /></span>
      <span className="ml-[13px]"><Windows /></span>
      <svg width="9" height="6" viewBox="0 0 9 6" className="ml-[12px]"><path d="M0 0h9L4.500 6z" fill="#555" /></svg>
      <span className="ml-[15px]"><CloseX /></span>
      <span className="ml-[12px]"><Shapes /></span>
      <svg width="9" height="6" viewBox="0 0 9 6" className="ml-[8px]"><path d="M0 0h9L4.500 6z" fill="#555" /></svg>
      <span className="ml-[7px] h-[36px] w-px bg-[#d8d8d8]" />
      <span className="ml-[11px]"><Customize /></span>
      <span className="ml-[460px] whitespace-pre text-[24.750px] leading-none text-[#444]">12V电池-外壳 (活动的) - Creo Parametric 9.0</span>
    </header>
    <nav className="flex h-[49px] items-center bg-[#3d4446] text-[26px] leading-none text-white">
      <div className="flex h-full w-[112px] items-center justify-center bg-[linear-gradient(90deg,#6cc13c,#55ad2e)]">文件</div>
      <span className="ml-[32px]">模型</span>
      <span className="ml-[67px]">注释</span>
      <span className="ml-[69px]">工具</span>
      <span className="ml-[65px]">视图</span>
      <div className="ml-[47px] mt-[1px] flex h-[48px] w-[117px] items-center justify-center bg-[#66757a] pr-[4px] text-[28px] italic text-[#e4e8e8]">拉伸</div>
      <div className="mt-[1px] flex h-[48px] w-[119px] items-center justify-center bg-white pr-[4px] text-[28px] italic text-[#444]">草绘</div>
    </nav>
    <Ribbon />
    <div className="h-[1px] bg-[#c6c8c8]" />
    <main className="flex flex-1 min-h-0">
      <Tree />
      <section className="relative flex-1 bg-white">
        <Sketch />
        <GraphicsBar />
      </section>
    </main>
  </div>
);

export default App;
